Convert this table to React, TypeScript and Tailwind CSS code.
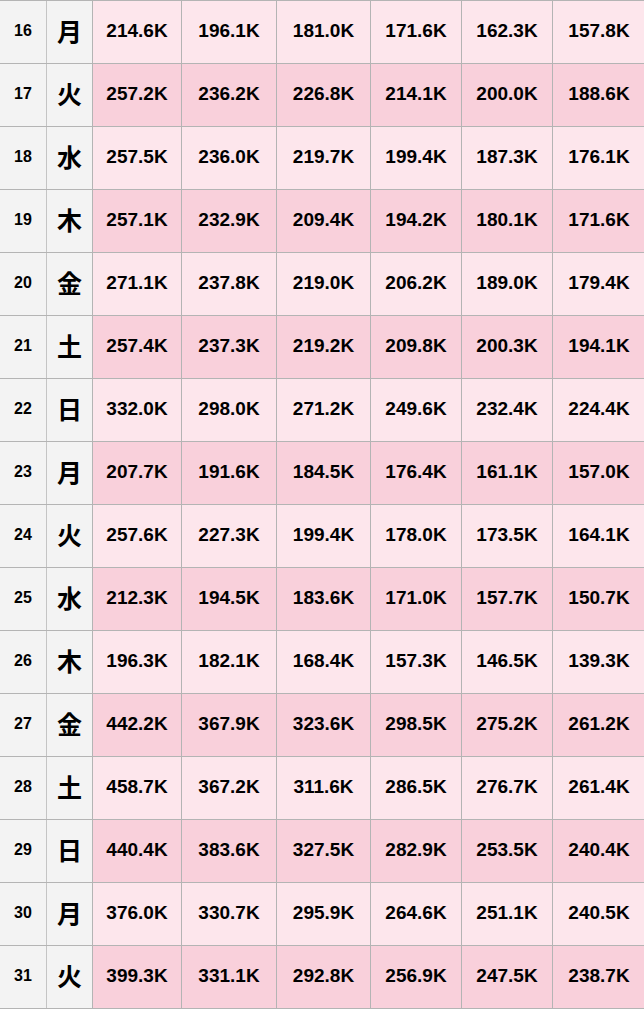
import React from "react";

// rows: day, weekday, six values
const rows: [number, string, string[]][] = [
  [16, "月", ["214.6K", "196.1K", "181.0K", "171.6K", "162.3K", "157.8K"]],
  [17, "火", ["257.2K", "236.2K", "226.8K", "214.1K", "200.0K", "188.6K"]],
  [18, "水", ["257.5K", "236.0K", "219.7K", "199.4K", "187.3K", "176.1K"]],
  [19, "木", ["257.1K", "232.9K", "209.4K", "194.2K", "180.1K", "171.6K"]],
  [20, "金", ["271.1K", "237.8K", "219.0K", "206.2K", "189.0K", "179.4K"]],
  [21, "土", ["257.4K", "237.3K", "219.2K", "209.8K", "200.3K", "194.1K"]],
  [22, "日", ["332.0K", "298.0K", "271.2K", "249.6K", "232.4K", "224.4K"]],
  [23, "月", ["207.7K", "191.6K", "184.5K", "176.4K", "161.1K", "157.0K"]],
  [24, "火", ["257.6K", "227.3K", "199.4K", "178.0K", "173.5K", "164.1K"]],
  [25, "水", ["212.3K", "194.5K", "183.6K", "171.0K", "157.7K", "150.7K"]],
  [26, "木", ["196.3K", "182.1K", "168.4K", "157.3K", "146.5K", "139.3K"]],
  [27, "金", ["442.2K", "367.9K", "323.6K", "298.5K", "275.2K", "261.2K"]],
  [28, "土", ["458.7K", "367.2K", "311.6K", "286.5K", "276.7K", "261.4K"]],
  [29, "日", ["440.4K", "383.6K", "327.5K", "282.9K", "253.5K", "240.4K"]],
  [30, "月", ["376.0K", "330.7K", "295.9K", "264.6K", "251.1K", "240.5K"]],
  [31, "火", ["399.3K", "331.1K", "292.8K", "256.9K", "247.5K", "238.7K"]],
];

const valueWidths = ["w-[89px]", "w-[95px]", "w-[94px]", "w-[91px]", "w-[91px]", "w-[92px]"];

export default function App() {
  return (
    <div
      className="w-[644px] h-[1010px] overflow-hidden bg-white text-black"
      style={{ fontFamily: '"Liberation Sans", Arial, "Noto Sans CJK JP", sans-serif' }}
    >
      <div className="border-t border-[#b4b4b4]">
        {rows.map(([day, wd, vals], i) => {
          const pink = i % 2 === 0 ? "bg-[#fde6ec]" : "bg-[#f9d0db]";
          return (
            <div key={day} className="flex h-[63px] border-b border-[#b4b4b4]">
              <div className="w-[47px] shrink-0 flex items-center justify-center pb-[2px] bg-[#f3f3f3] border-r border-[#c4c4c4] text-[16px] font-bold">
                {day}
              </div>
              <div
                className="w-[46px] shrink-0 flex items-center justify-center pb-[3px] bg-[#f3f3f3] border-r border-[#b4b4b4] text-[25px] font-bold"
                style={{ fontFamily: '"Noto Sans CJK JP", sans-serif' }}
              >
                {wd}
              </div>
              {vals.map((v, j) => (
                <div
                  key={j}
                  className={`${valueWidths[j]} shrink-0 flex items-center justify-center pb-[2px] ${pink} ${
                    j < 5 ? "border-r border-[#b4b4b4]" : ""
                  } text-[19px] font-bold`}
                >
                  {v}
                </div>
              ))}
            </div>
          );
        })}
      </div>
    </div>
  );
}
